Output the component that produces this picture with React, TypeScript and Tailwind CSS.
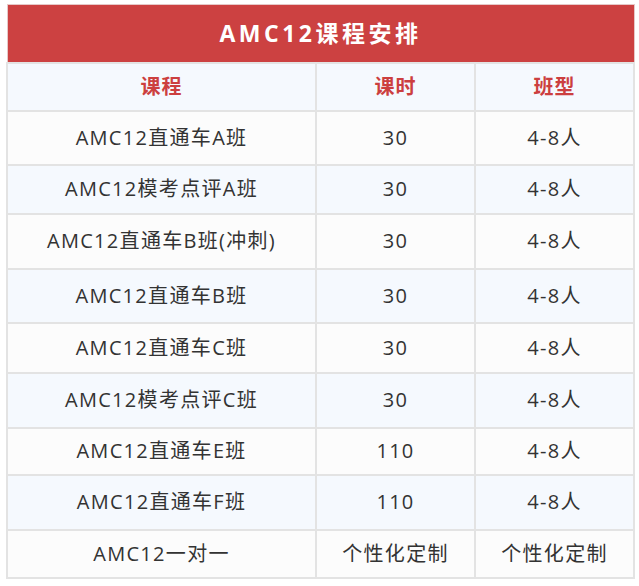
const rows = [
  { name: 'AMC12直通车A班', hours: '30', size: '4-8人', h: 'h-[54px]' },
  { name: 'AMC12模考点评A班', hours: '30', size: '4-8人', h: 'h-[49px]' },
  { name: 'AMC12直通车B班(冲刺)', hours: '30', size: '4-8人', h: 'h-[55px]' },
  { name: 'AMC12直通车B班', hours: '30', size: '4-8人', h: 'h-[54px]' },
  { name: 'AMC12直通车C班', hours: '30', size: '4-8人', h: 'h-[50px]' },
  { name: 'AMC12模考点评C班', hours: '30', size: '4-8人', h: 'h-[55px]' },
  { name: 'AMC12直通车E班', hours: '110', size: '4-8人', h: 'h-[47px]' },
  { name: 'AMC12直通车F班', hours: '110', size: '4-8人', h: 'h-[55px]' },
  { name: 'AMC12一对一', hours: '个性化定制', size: '个性化定制', h: 'h-[48px]' },
]

export default function App() {
  return (
    <div className="w-[639px] h-[586px] bg-white pt-[4px] pl-[6px] font-['Open_Sans','Noto_Sans_CJK_SC',sans-serif]">
      <table className="w-[629px] border-collapse table-fixed">
        <colgroup>
          <col className="w-[309px]" />
          <col className="w-[159px]" />
          <col />
        </colgroup>
        <thead>
          <tr>
            <th
              colSpan={3}
              className="h-[58px] bg-[#cc4141] border border-[#e6c8c8] text-white text-[23px] font-bold tracking-[3.5px]"
            >
              AMC12课程安排
            </th>
          </tr>
          <tr className="bg-[#f5f9fe] text-[#cc3f3f] text-[20px] font-semibold tracking-[1px]">
            <th className="h-[48px] border-2 border-[#e3e3e3]">课程</th>
            <th className="border-2 border-[#e3e3e3]">课时</th>
            <th className="border-2 border-[#e3e3e3]">班型</th>
          </tr>
        </thead>
        <tbody>
          {rows.map((r, i) => (
            <tr
              key={r.name}
              className={`${r.h} text-[20px] tracking-[1.3px] text-[#333] text-center ${i % 2 === 0 ? 'bg-[#fcfcfc]' : 'bg-[#f5f9fe]'}`}
            >
              <td className="border-2 border-[#e3e3e3]">{r.name}</td>
              <td className="border-2 border-[#e3e3e3]">{r.hours}</td>
              <td className="border-2 border-[#e3e3e3]">{r.size}</td>
            </tr>
          ))}
        </tbody>
      </table>
    </div>
  )
}
